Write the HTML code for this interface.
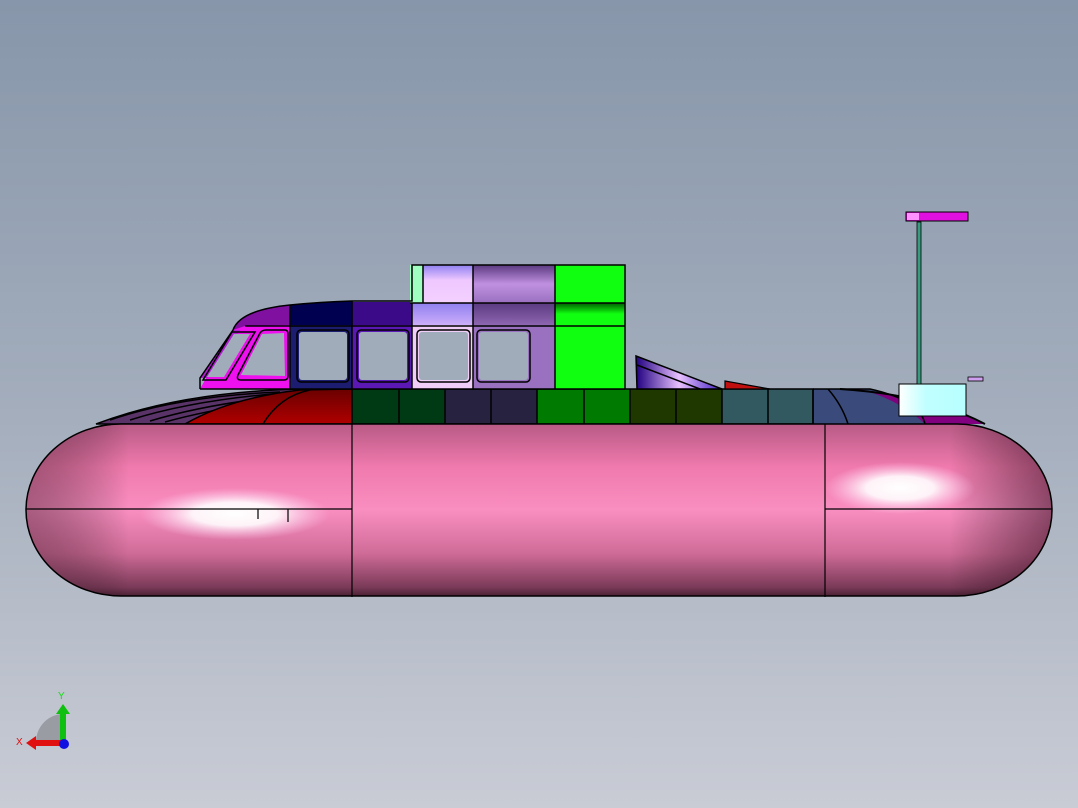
<!DOCTYPE html>
<html><head><meta charset="utf-8"><style>
html,body{margin:0;padding:0;width:1078px;height:808px;overflow:hidden}
body{background:linear-gradient(#8796aa 0%,#a3adbc 50%,#c9ccd5 100%)}
svg{display:block}
</style></head><body>
<svg width="1078" height="808" viewBox="0 0 1078 808" xmlns="http://www.w3.org/2000/svg">
<defs>
<linearGradient id="hullV" x1="0" y1="0" x2="0" y2="1">
<stop offset="0" stop-color="#b85a85"/><stop offset="0.25" stop-color="#f07aad"/><stop offset="0.5" stop-color="#f98ec0"/><stop offset="0.75" stop-color="#d06c98"/><stop offset="0.95" stop-color="#7a3a58"/><stop offset="1" stop-color="#4a2034"/></linearGradient>
<linearGradient id="hullH" x1="0" y1="0" x2="1" y2="0">
<stop offset="0" stop-color="#5a2a40" stop-opacity="0.5"/><stop offset="0.1" stop-color="#000" stop-opacity="0"/><stop offset="0.9" stop-color="#000" stop-opacity="0"/><stop offset="1" stop-color="#200010" stop-opacity="0.5"/></linearGradient>
<radialGradient id="spec"><stop offset="0" stop-color="#fff"/><stop offset="0.45" stop-color="#fff" stop-opacity="0.9"/><stop offset="1" stop-color="#ffd0f0" stop-opacity="0"/></radialGradient>
<linearGradient id="red" x1="0" y1="0" x2="0" y2="1"><stop offset="0" stop-color="#6a0000"/><stop offset="1" stop-color="#b00000"/></linearGradient>
<linearGradient id="lav" x1="0" y1="0" x2="0" y2="1"><stop offset="0" stop-color="#9080f0"/><stop offset="0.4" stop-color="#eec8ff"/><stop offset="1" stop-color="#f4d0ff"/></linearGradient>
<linearGradient id="pur2" x1="0" y1="0" x2="0" y2="1"><stop offset="0" stop-color="#5a3a80"/><stop offset="0.5" stop-color="#c090e0"/><stop offset="1" stop-color="#9a70c0"/></linearGradient>
<linearGradient id="grn" x1="0" y1="0" x2="0" y2="1"><stop offset="0" stop-color="#006000"/><stop offset="0.5" stop-color="#10ff10"/><stop offset="1" stop-color="#10ff10"/></linearGradient>
<linearGradient id="ramp" x1="0" y1="0" x2="1" y2="0"><stop offset="0" stop-color="#200080"/><stop offset="0.5" stop-color="#e8c0ff"/><stop offset="1" stop-color="#4020c0"/></linearGradient>
<linearGradient id="box" x1="0" y1="0" x2="1" y2="0"><stop offset="0" stop-color="#fff"/><stop offset="0.4" stop-color="#c0ffff"/><stop offset="1" stop-color="#b8ffff"/></linearGradient>
</defs>

<!-- left deck dome -->
<path d="M96,424 Q180,392 300,389 L352,389 L352,424 Z" fill="#5a3468" stroke="#000" stroke-width="1.5"/>
<path d="M110,420 Q180,396 280,392 M130,420 Q200,398 300,392 M150,421 Q220,400 320,393 M165,422 Q230,404 330,394" fill="none" stroke="#000" stroke-width="1.5"/>
<path d="M185,424 Q230,398 300,390 L352,389 L352,424 Z" fill="url(#red)" stroke="#000" stroke-width="1.5"/>
<path d="M263,424 Q280,396 310,390" fill="none" stroke="#000" stroke-width="1.5"/>

<!-- deck band -->
<rect x="352" y="389" width="93" height="35" fill="#003a14"/>
<rect x="445" y="389" width="92" height="35" fill="#262240"/>
<rect x="537" y="389" width="93" height="35" fill="#007a00"/>
<rect x="630" y="389" width="92" height="35" fill="#1e3800"/>
<rect x="722" y="389" width="91" height="35" fill="#325860"/>
<path d="M813,389 L870,389 Q920,400 925,424 L813,424 Z" fill="#3a4a7a"/>
<path d="M840,389 Q930,395 985,424 L925,424 Q900,400 860,389 Z" fill="#800080"/>
<path d="M840,389 Q930,395 985,424" fill="none" stroke="#000" stroke-width="2"/>
<g stroke="#000" stroke-width="1.5" fill="none">
<rect x="352" y="389" width="461" height="35"/>
<path d="M399,389V424M445,389V424M491,389V424M537,389V424M584,389V424M630,389V424M676,389V424M722,389V424M768,389V424M813,389V424"/>
<path d="M828,389 Q842,405 848,424" />
<path d="M813,389 L870,389 Q920,400 925,424"/>
</g>

<!-- hull -->
<g>
<path d="M121,424 L957,424 A95,86 0 0 1 957,596 L121,596 A95,86 0 0 1 121,424 Z" fill="url(#hullV)"/>
<path d="M121,424 L957,424 A95,86 0 0 1 957,596 L121,596 A95,86 0 0 1 121,424 Z" fill="url(#hullH)"/>
<ellipse cx="235" cy="514" rx="95" ry="26" fill="url(#spec)"/>
<ellipse cx="900" cy="488" rx="75" ry="26" fill="url(#spec)"/>
<path d="M121,424 L957,424 A95,86 0 0 1 957,596 L121,596 A95,86 0 0 1 121,424 Z" fill="none" stroke="#000" stroke-width="1.5"/>
<path d="M26,509H352M825,509H1052M352,424V597M825,424V597M258,509V519M288,509V522" stroke="#000" stroke-width="1.2"/>
</g>

<!-- cabin -->
<path d="M200,389 L233,330 Q240,310 290,305 L290,389 Z" fill="#ee10ee"/>
<path d="M233,330 Q240,310 290,305 L290,325 L245,326 Z" fill="#8010a0"/>
<path d="M200,378 L233,330 L240,330 L208,378 Z" fill="#b020d0"/>
<path d="M290,305 Q320,302 352,301 L352,389 L290,389 Z" fill="#1c1c70"/>
<path d="M290,305 Q320,302 352,301 L352,325 L290,325 Z" fill="#000050"/>
<rect x="352" y="302" width="60" height="87" fill="#5c18b4"/>
<rect x="352" y="302" width="60" height="23" fill="#3a0a88"/>
<rect x="412" y="303" width="61" height="86" fill="url(#lav)"/>
<rect x="412" y="325" width="61" height="64" fill="#f0cef8"/>
<rect x="473" y="303" width="82" height="86" fill="url(#pur2)"/>
<rect x="473" y="325" width="82" height="64" fill="#9a70c0"/>
<rect x="555" y="265" width="70" height="124" fill="#10ff10"/>
<rect x="555" y="303" width="70" height="22" fill="url(#grn)"/>
<rect x="410" y="265" width="13" height="38" fill="#a0ffc0"/>
<rect x="423" y="265" width="50" height="38" fill="url(#lav)"/>
<rect x="473" y="265" width="82" height="38" fill="url(#pur2)"/>
<g stroke="#000" stroke-width="1.5" fill="none">
<path d="M200,389 L200,378 L233,330 Q240,310 290,305 Q320,302 352,301 L412,301 L412,265 L625,265 L625,389"/>
<path d="M290,305V389M352,301V389M412,303V389M473,265V389M555,265V389M410,303H625M245,326H625M200,389H625M423,265V303"/>
<path d="M203,380 L232,332 L255,332 L226,380 Z"/>
<path d="M238,375 L260,333 Q262,330 266,330 L285,330 Q288,330 288,334 L288,376 Q288,380 284,380 L241,380 Q236,380 238,375 Z"/>
<rect x="297" y="330" width="52" height="52" rx="4"/>
<rect x="357" y="330" width="52" height="52" rx="4"/>
<rect x="417" y="330" width="53" height="52" rx="4"/>
<rect x="477" y="330" width="53" height="52" rx="4"/>
</g>
<g fill="#a0acba">
<path d="M241,375 L262,334 L284,333 L285,376 Z"/>
<path d="M207,377 L234,334 L250,334 L224,377 Z"/>
<rect x="299" y="332" width="48" height="48" rx="3"/>
<rect x="359" y="332" width="48" height="48" rx="3"/>
<rect x="419" y="332" width="49" height="48" rx="3"/>
<rect x="479" y="332" width="49" height="48" rx="3"/>
</g>

<!-- ramp & rear -->
<path d="M636,356 L722,389 L637,389 Z" fill="url(#ramp)" stroke="#000" stroke-width="1.5"/>
<path d="M637,365 L700,389" stroke="#000" stroke-width="1.5"/>
<path d="M725,381 L770,389 L725,389 Z" fill="#c01010" stroke="#000" stroke-width="1.2"/>
<rect x="899" y="384" width="67" height="32" fill="url(#box)" stroke="#000" stroke-width="1"/>
<rect x="917" y="222" width="4" height="162" fill="#3a9a80" stroke="#000" stroke-width="0.8"/>
<rect x="906" y="212" width="62" height="9" fill="#e010e0" stroke="#000" stroke-width="1"/>
<rect x="907" y="213" width="12" height="7" fill="#ff90ff"/>
<rect x="968" y="377" width="15" height="4" fill="#d0a0f0" stroke="#000" stroke-width="0.8"/>

<!-- axis triad -->
<path d="M36,742 A28,28 0 0 1 62,714 L62,742 Z" fill="#9a9ca4"/>
<rect x="60" y="712" width="6" height="30" fill="#10c010"/>
<path d="M56,714 L63,704 L70,714 Z" fill="#10c010"/>
<rect x="34" y="740" width="28" height="6" fill="#e01010"/>
<path d="M36,736 L26,743 L36,750 Z" fill="#e01010"/>
<circle cx="64" cy="744" r="5" fill="#1010e0"/>
<text x="58" y="699" font-family="Liberation Sans, sans-serif" font-size="10" fill="#10e010">Y</text>
<text x="16" y="745" font-family="Liberation Sans, sans-serif" font-size="10" fill="#e01010">X</text>
</svg>
</body></html>
